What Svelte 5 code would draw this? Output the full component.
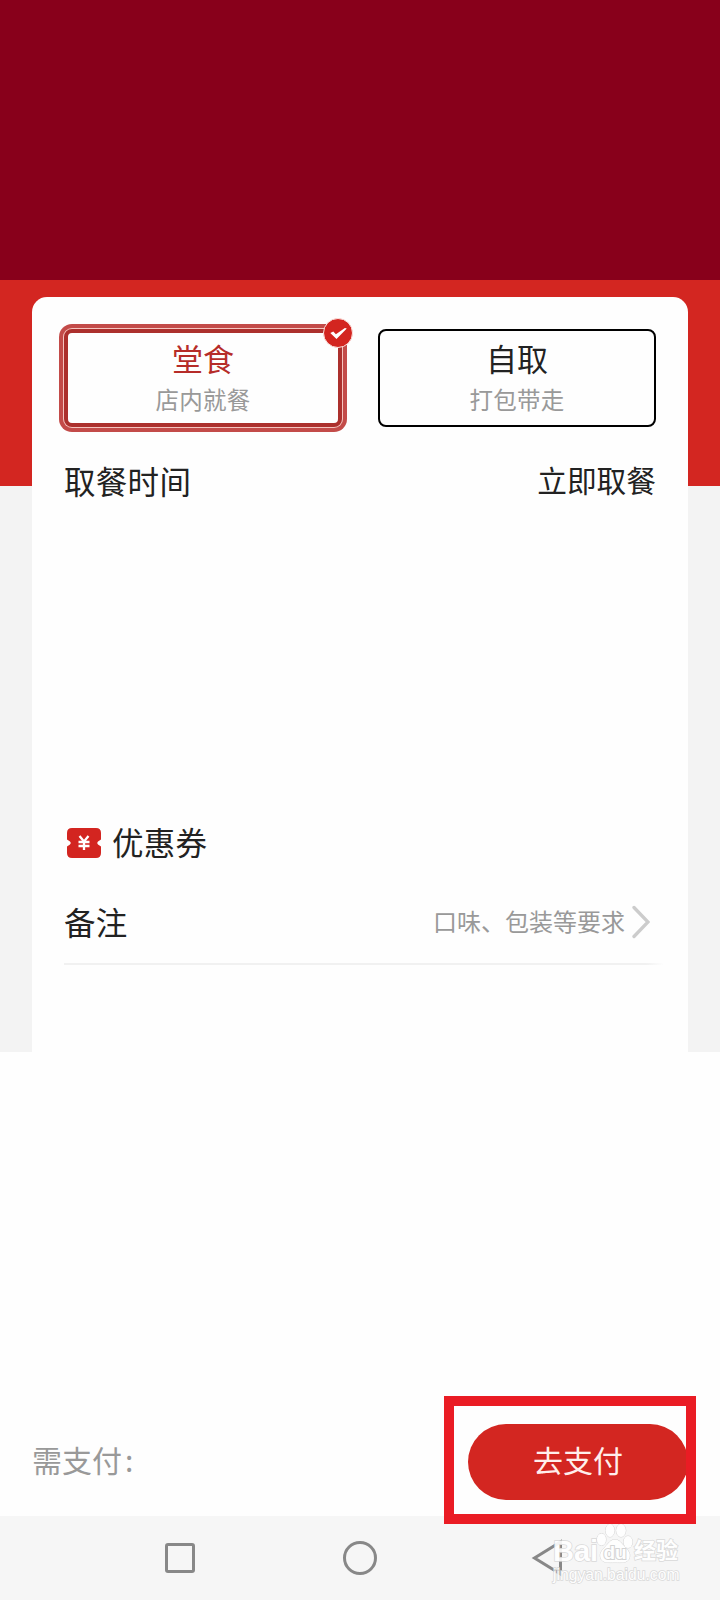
<script>
  let selected = $state('dine');

  const options = [
    { id: 'dine', title: '堂食', hint: '店内就餐' },
    { id: 'pickup', title: '自取', hint: '打包带走' }
  ];
</script>

<div class="screen">
  <header class="top"></header>

  <main class="body">
    <section class="card">
      <div class="options">
        {#each options as option}
          <button
            class="option"
            class:active={selected === option.id}
            onclick={() => (selected = option.id)}
          >
            <span class="option-title">{option.title}</span>
            <span class="option-hint">{option.hint}</span>
            {#if selected === option.id}
              <svg class="check" width="30" height="30" viewBox="0 0 30 30">
                <circle cx="15" cy="15" r="14.5" fill="#d32520" stroke="#fbe3df" />
                <path d="M7.3 15l3-1.5 2.6 2.8 9-6.4 1.9.5-10.3 10.5z" fill="#fff" />
              </svg>
            {/if}
          </button>
        {/each}
      </div>

      <div class="row time">
        <span class="label">取餐时间</span>
        <span class="value">立即取餐</span>
      </div>

      <div class="row coupon">
        <svg width="34" height="30" viewBox="0 0 34 30">
          <path
            d="M5 0h24q5 0 5 5v6.5l-3 2a2 2 0 0 0 0 3l3 2V25q0 5-5 5H5q-5 0-5-5v-6.500l3-2a2 2 0 0 0 0-3l-3-2V5q0-5 5-5z"
            fill="#d32520"
          />
          <path
            d="M12.500 8l4.500 5.500L21.500 8M11.500 14h11M11.500 18h11M17 13.500V22"
            fill="none"
            stroke="#fff"
            stroke-width="2.300"
          />
        </svg>
        <span class="label">优惠券</span>
      </div>

      <div class="row note">
        <span class="label">备注</span>
        <span class="note-hint">口味、包装等要求</span>
        <svg width="18" height="34" viewBox="0 0 18 34">
          <path d="M2 2.500l14 14.500-14 14.500" fill="none" stroke="#ccc" stroke-width="3.300" stroke-linecap="round" />
        </svg>
      </div>
      <div class="divider"></div>
    </section>
  </main>

  <footer class="pay">
    <span class="due">需支付<i>:</i></span>
    <div class="frame">
      <button class="pay-button">去支付</button>
    </div>
  </footer>

  <nav class="nav">
    <svg width="60" height="38" viewBox="0 0 60 38">
      <rect x="16.500" y="5.500" width="27" height="27" rx="1.500" />
    </svg>
    <svg width="60" height="38" viewBox="0 0 60 38">
      <circle cx="30" cy="19" r="15.500" />
    </svg>
    <svg width="60" height="38" viewBox="0 0 60 38">
      <path d="M50.500 3v32L24.500 19z" />
    </svg>
  </nav>

  <div class="watermark">
    <div class="brand">
      <span class="bai">Bai</span>
      <svg width="38" height="44" viewBox="0 0 38 44">
        <g fill="#fff" stroke="#d2d2d2">
          <ellipse cx="5.500" cy="16.500" rx="4.500" ry="6" />
          <ellipse cx="14" cy="7.500" rx="4.500" ry="6.500" />
          <ellipse cx="25" cy="7.500" rx="4.800" ry="6.500" />
          <ellipse cx="32" cy="19" rx="4.500" ry="6" />
          <path d="M19 16.500c4.500 0 6.500 4 9.500 7 4 4 6 7 5 11-1.500 6-8 5-14.500 5s-13 1-14.500-5c-1-4 1-7 5-11 3-3 5-7 9.500-7z" />
        </g>
        <text x="19" y="36" text-anchor="middle">du</text>
      </svg>
      <span class="cn">经验</span>
    </div>
    <div class="site">jingyan.baidu.com</div>
  </div>
</div>

<style>
  :global(body) {
    margin: 0;
    background: #fff;
  }

  .screen {
    position: relative;
    display: flex;
    flex-direction: column;
    width: 720px;
    height: 1600px;
    overflow: hidden;
    background: #fefefe;
    color: #222;
    font-family: 'Noto Sans CJK SC', sans-serif;
  }

  button {
    font-family: inherit;
    cursor: pointer;
  }

  .top {
    height: 280px;
    flex: none;
    background: #88001b;
  }

  .body {
    box-sizing: border-box;
    height: 772px;
    flex: none;
    padding: 17px 32px 0;
    background: linear-gradient(#d32621 206px, #f3f3f3 206px);
  }

  .card {
    box-sizing: border-box;
    height: 755px;
    padding: 32px 32px 0;
    border-radius: 15px 15px 0 0;
    background: #fefefe;
  }

  .options {
    display: flex;
    gap: 36px;
  }

  .option {
    position: relative;
    display: flex;
    flex-direction: column;
    align-items: center;
    box-sizing: border-box;
    width: 278px;
    height: 98px;
    padding: 6px 0 0;
    border: 2px solid #000;
    border-radius: 8px;
    background: #fefefe;
    color: #222;
  }

  .option.active {
    padding-top: 4px;
    border: 4px solid #ac302d;
    box-shadow: 0 0 0 1px #f5c4bf, 0 0 0 5px #c34b49;
    color: #b62c29;
  }

  .option-title {
    font-size: 31px;
    line-height: 42px;
  }

  .option-hint {
    color: #999;
    font-size: 23.5px;
    letter-spacing: 0.3px;
    line-height: 40px;
  }

  .check {
    position: absolute;
    top: -15px;
    right: -15px;
  }

  .row {
    display: flex;
    align-items: center;
    height: 44px;
  }

  .label {
    font-size: 31.5px;
    letter-spacing: 0.3px;
    line-height: 44px;
  }

  .time {
    justify-content: space-between;
    margin-top: 31px;
  }

  .value {
    margin-top: -2px;
    font-size: 29.7px;
  }

  .coupon {
    gap: 11px;
    margin-top: 319px;
    padding-left: 3px;
  }

  .coupon .label {
    margin-top: -4px;
  }

  .note {
    height: 82px;
    margin-top: 16px;
  }

  .note .label {
    margin-top: -3px;
  }

  .note-hint {
    margin-top: -3px;
    margin-left: auto;
    margin-right: 7px;
    color: #999;
    font-size: 24px;
  }

  .note svg {
    margin-right: 6px;
  }

  .divider {
    height: 2px;
    margin-right: -8px;
    background: linear-gradient(90deg, #f1f1f1 97%, #fefefe);
  }

  .pay {
    display: flex;
    align-items: center;
    justify-content: space-between;
    box-sizing: border-box;
    height: 128px;
    margin-top: 344px;
    padding: 0 24px 0 32px;
    flex: none;
  }

  .due {
    margin-top: -3px;
    color: #999;
    font-size: 30px;
  }

  .due i {
    margin-left: 3px;
    font-style: normal;
  }

  .frame {
    z-index: 1;
    display: flex;
    align-items: center;
    box-sizing: border-box;
    width: 252px;
    height: 128px;
    padding: 4px 0 0 14px;
    border: 10px solid #ea1c24;
    background: #fefefe;
    overflow: hidden;
  }

  .pay-button {
    width: 220px;
    height: 76px;
    flex: none;
    padding: 0 0 6px;
    border: 0;
    border-radius: 38px;
    background: #d32621;
    color: #ffeeec;
    font-size: 30px;
  }

  .nav {
    display: flex;
    justify-content: center;
    align-items: center;
    gap: 120px;
    height: 84px;
    margin-top: -8px;
    flex: none;
    background: #f6f6f6;
  }

  .nav svg {
    fill: none;
    stroke: #888;
    stroke-width: 3;
  }

  .watermark {
    position: absolute;
    top: 1523px;
    left: 553px;
    width: 130px;
    color: #fff;
    font-family: 'Liberation Sans', 'Noto Sans CJK SC', sans-serif;
    -webkit-text-stroke: 1.5px #d6d6d6;
    paint-order: stroke fill;
    opacity: 0.9;
  }

  .brand {
    display: flex;
    align-items: flex-end;
    height: 44px;
    font-size: 29px;
    font-weight: bold;
    line-height: 32px;
  }

  .bai {
    width: 43px;
  }

  .brand svg {
    flex: none;
  }

  .brand text {
    fill: #fff;
    stroke: #d0d0d0;
    stroke-width: 2px;
    font-size: 19px;
  }

  .cn {
    font-size: 22px;
    white-space: nowrap;
  }

  .site {
    font-size: 15.7px;
    line-height: 16px;
  }
</style>
